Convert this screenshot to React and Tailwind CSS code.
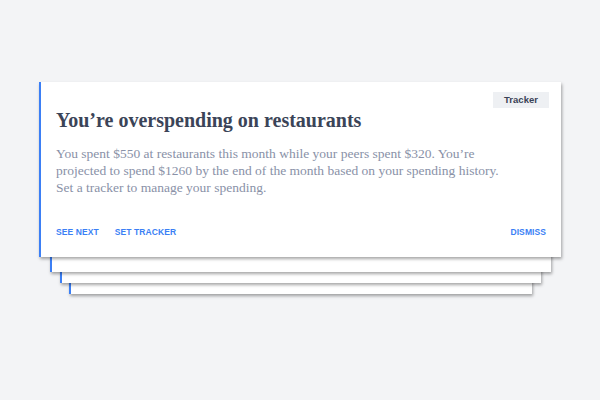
import React from 'react'

const serif = { fontFamily: '"Liberation Serif", "DejaVu Serif", serif' }

export default function App() {
  return (
    <div className="w-[600px] h-[400px] bg-[#f3f4f6] pt-[82px] flex flex-col items-center font-['Liberation_Sans',Arial,sans-serif]">
      {/* main card */}
      <div className="relative z-40 w-[522px] h-[175px] bg-white border-l-2 border-[#3b7ff5] shadow-[1px_2px_3px_rgba(0,0,0,0.35)] pl-[15px] pr-[15px] pt-[24px] flex flex-col">
        <span className="absolute top-[10px] right-[12px] w-[56px] h-[16px] bg-[#eef0f3] flex items-center justify-center text-[9.5px] font-bold text-[#3a4256]">
          Tracker
        </span>
        <h1 style={serif} className="text-[20px] leading-[28px] font-bold text-[#3b4458]">
          You’re overspending on restaurants
        </h1>
        <p style={serif} className="mt-[11px] text-[13.5px] leading-[17px] text-[#8991a7] whitespace-nowrap">
          You spent $550 at restaurants this month while your peers spent $320. You’re
          <br />
          projected to spend $1260 by the end of the month based on your spending history.
          <br />
          Set a tracker to manage your spending.
        </p>
        <div className="mt-auto mb-[19px] flex items-center text-[8.5px] leading-[12px] font-bold tracking-[0.01em] text-[#3b7ff5]">
          <button className="uppercase">See next</button>
          <button className="uppercase ml-[16px]">Set tracker</button>
          <button className="uppercase ml-auto">Dismiss</button>
        </div>
      </div>
      {/* stacked cards behind */}
      <div className="relative z-30 -mt-[10px] w-[501px] h-[25px] bg-white border-l-2 border-[#3b7ff5] shadow-[1px_2px_3px_rgba(0,0,0,0.35)]" />
      <div className="relative z-20 -mt-[10px] w-[481px] h-[21px] bg-white border-l-2 border-[#3b7ff5] shadow-[1px_2px_3px_rgba(0,0,0,0.35)]" />
      <div className="relative z-10 -mt-[10px] w-[463px] h-[21px] bg-white border-l-2 border-[#3b7ff5] shadow-[1px_2px_3px_rgba(0,0,0,0.35)]" />
    </div>
  )
}
